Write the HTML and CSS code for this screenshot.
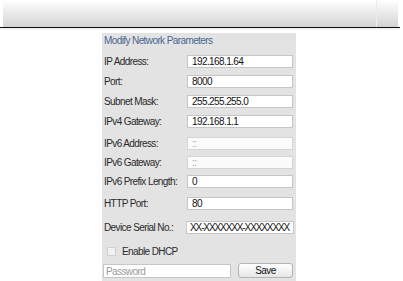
FILE: index.html
```html
<!DOCTYPE html>
<html lang="en">
<head>
    <meta charset="UTF-8">
    <title>Modify Network Parameters</title>
    <link rel="stylesheet" href="styles.css">
</head>
<body>
    <div class="topbar">
        <div class="topbar-main"></div>
        <div class="topbar-side"></div>
    </div>
    <div class="topbar-line"></div>

    <div class="panel">
        <div class="panel-title">Modify Network Parameters</div>

        <div class="row">
            <label>IP Address:</label>
            <div class="field">192.168.1.64</div>
        </div>
        <div class="row">
            <label>Port:</label>
            <div class="field">8000</div>
        </div>
        <div class="row">
            <label>Subnet Mask:</label>
            <div class="field">255.255.255.0</div>
        </div>
        <div class="row">
            <label>IPv4 Gateway:</label>
            <div class="field">192.168.1.1</div>
        </div>
        <div class="row row-wide">
            <label>IPv6 Address:</label>
            <div class="field field-off">::</div>
        </div>
        <div class="row row-tight">
            <label>IPv6 Gateway:</label>
            <div class="field field-off">::</div>
        </div>
        <div class="row row-tight">
            <label>IPv6 Prefix Length:</label>
            <div class="field">0</div>
        </div>
        <div class="row row-wide">
            <label>HTTP Port:</label>
            <div class="field">80</div>
        </div>
        <div class="row row-wider">
            <label>Device Serial No.:</label>
            <div class="field field-serial">XX-XXXXXXX-XXXXXXXX</div>
        </div>

        <div class="check-row">
            <span class="checkbox"></span>
            <span>Enable DHCP</span>
        </div>

        <div class="save-row">
            <div class="password">Password</div>
            <button class="save-btn">Save</button>
        </div>
    </div>
</body>
</html>
```

FILE: styles.css
```css
body {
    margin: 0;
    font-family: "Liberation Sans", Arial, sans-serif;
    font-size: 10px;
    letter-spacing: -0.6px;
    color: #2a2a2a;
    background: #fff;
}
.topbar {
    display: flex;
    height: 27px;
    margin: 0 5px 0 3px;
    background: linear-gradient(#ffffff, #d3d3d3);
}
.topbar-main {
    flex: 1;
}
.topbar-side {
    width: 21px;
    border-left: 1px solid #ececec;
}
.topbar-line {
    width: 400px;
    height: 1px;
    background: #111;
    box-shadow: 0 1px 2px rgba(0,0,0,0.15);
}
.panel {
    width: 194px;
    height: 248px;
    margin: 5px 0 0 102px;
    padding-top: 1px;
    background: #e3e3e3;
    box-sizing: border-box;
}
.panel-title {
    height: 14px;
    line-height: 14px;
    padding-left: 2px;
    color: #4a6591;
}
.row {
    display: flex;
    align-items: center;
    height: 13px;
    margin-top: 7px;
}
.row-tight {
    margin-top: 6px;
}
.row-wide {
    margin-top: 9px;
}
.row-wider {
    margin-top: 11px;
}
.row label {
    width: 83px;
    padding-left: 2px;
    line-height: 13px;
}
.field {
    width: 106px;
    height: 13px;
    line-height: 12px;
    padding-left: 4px;
    box-sizing: border-box;
    background: #fff;
    border: 1px solid #c6c6c6;
    color: #111;
}
.field-off {
    background: #fbfbfb;
    border-color: #d4d4d4;
    color: #b09a8a;
}
.field-serial {
    width: 108px;
    margin-left: -1px;
    padding-left: 3px;
    letter-spacing: -1.1px;
    overflow: hidden;
    white-space: nowrap;
}
.check-row {
    display: flex;
    align-items: center;
    gap: 6px;
    height: 13px;
    margin-top: 11px;
    padding-left: 5px;
}
.checkbox {
    width: 7px;
    height: 7px;
    border: 1px solid #d0d0d0;
    background: #f2f2f2;
}
.save-row {
    display: flex;
    align-items: center;
    margin-top: 5px;
    padding-left: 1px;
}
.password {
    width: 128px;
    height: 14px;
    line-height: 13px;
    padding-left: 2px;
    box-sizing: border-box;
    background: #fff;
    border: 1px solid #c6c6c6;
    color: #9a9a9a;
}
.save-btn {
    width: 55px;
    height: 15px;
    margin-left: 7px;
    padding: 0;
    font: inherit;
    letter-spacing: inherit;
    color: #111;
    background: linear-gradient(#ffffff, #e6e6e6);
    border: 1px solid #b4b4b4;
    border-radius: 3px;
}
```
